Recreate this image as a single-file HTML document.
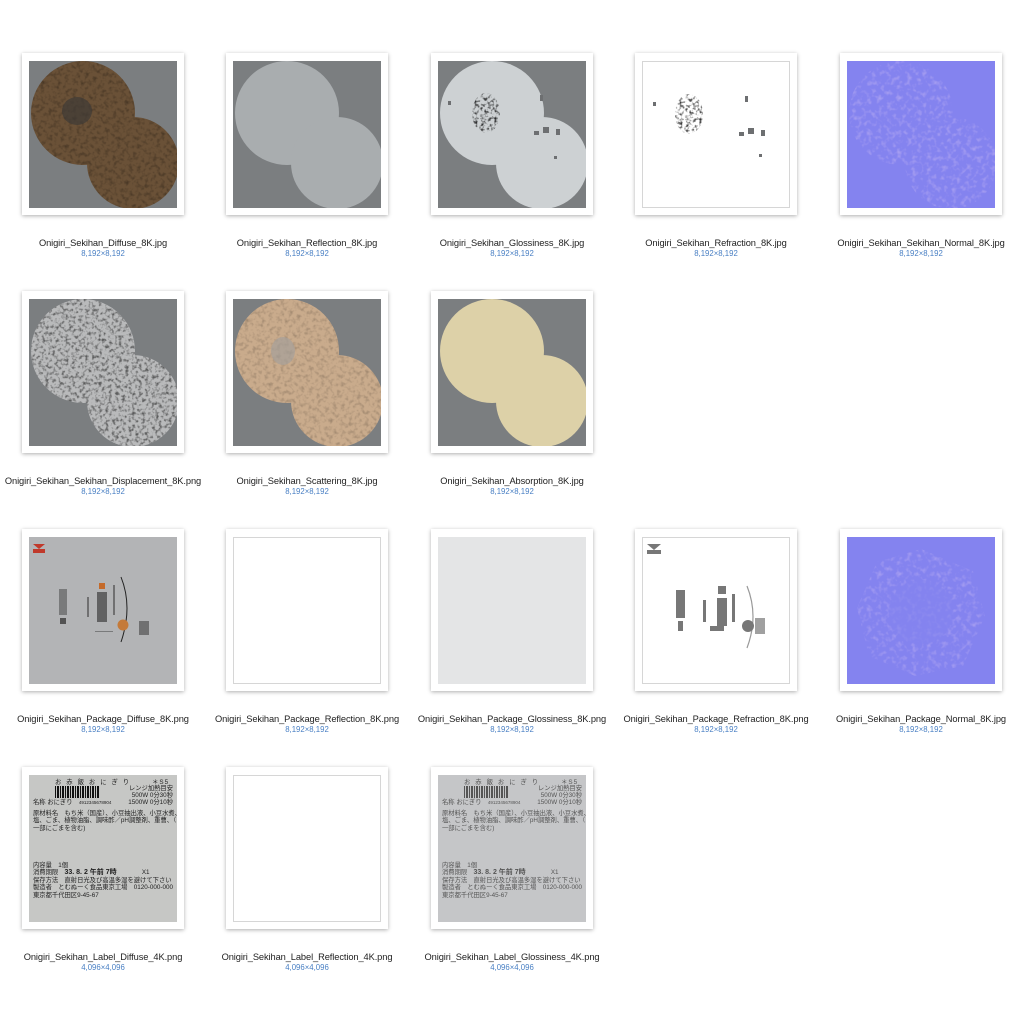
<!DOCTYPE html>
<html><head><meta charset="utf-8"><style>
body{margin:0;width:1024px;height:1024px;background:#fff;position:relative;overflow:hidden;font-family:"Liberation Sans","Noto Sans CJK JP",sans-serif}
.c{position:absolute;width:162px;height:162px;background:#fff;box-shadow:0 1px 4px rgba(0,0,0,.32)}
.i{position:absolute;left:7px;top:8px;width:148px;height:147px;overflow:hidden}
.i svg{display:block}
.w{box-sizing:border-box;border:1px solid #d6d6d6;background:#fff}
.t{position:absolute;width:220px;text-align:center;font-size:9.3px;color:#222;letter-spacing:-.1px}
.d{position:absolute;width:220px;text-align:center;font-size:7.8px;color:#4a80c4}
.lb{position:absolute;left:0;top:0;width:148px;height:147px;font-size:6.3px;line-height:7.4px;color:#222;padding:4px 4px;box-sizing:border-box;white-space:nowrap}
</style></head><body>
<svg width="0" height="0" style="position:absolute"><defs>
<filter id="n1"><feTurbulence type="fractalNoise" baseFrequency=".25" numOctaves="2" seed="3"/><feColorMatrix values="0 0 0 0 0 0 0 0 0 0 0 0 0 0 0 0 0 0 -2.2 1.2"/><feComposite in2="SourceGraphic" operator="in"/></filter>
<filter id="n2"><feTurbulence type="fractalNoise" baseFrequency=".3" numOctaves="2" seed="7"/><feColorMatrix values="0 0 0 0 0 0 0 0 0 0 0 0 0 0 0 0 0 0 -3 1.6"/><feComposite in2="SourceGraphic" operator="in"/></filter>
<filter id="n3"><feTurbulence type="fractalNoise" baseFrequency=".2" numOctaves="2" seed="5"/><feColorMatrix values="0 0 0 0 .6 0 0 0 0 .5 0 0 0 0 .9 0 0 0 -2.5 1.3"/><feComposite in2="SourceGraphic" operator="in"/></filter>
</defs></svg>

<div class="c" style="left:22px;top:53px"><div class="i"><svg width="148" height="147"><rect width="148" height="147" fill="#7b7e80"/><g fill="#6a5137"><circle cx="54" cy="52" r="52"/><circle cx="104" cy="102" r="46"/></g><g fill="#2c2a28" filter="url(#n1)" opacity=".3"><circle cx="54" cy="52" r="52"/><circle cx="104" cy="102" r="46"/></g><ellipse cx="48" cy="50" rx="15" ry="14" fill="#3e3a36" opacity=".7"/></svg></div></div>
<div class="t" style="left:-7px;top:238px">Onigiri_Sekihan_Diffuse_8K.jpg</div><div class="d" style="left:-7px;top:249px">8,192×8,192</div>

<div class="c" style="left:226px;top:53px"><div class="i"><svg width="148" height="147"><rect width="148" height="147" fill="#7b7e80"/><g fill="#a9adaf"><circle cx="54" cy="52" r="52"/><circle cx="104" cy="102" r="46"/></g></svg></div></div>
<div class="t" style="left:197px;top:238px">Onigiri_Sekihan_Reflection_8K.jpg</div><div class="d" style="left:197px;top:249px">8,192×8,192</div>

<div class="c" style="left:431px;top:53px"><div class="i"><svg width="148" height="147"><rect width="148" height="147" fill="#7b7e80"/><g fill="#cdd1d3"><circle cx="54" cy="52" r="52"/><circle cx="104" cy="102" r="46"/></g><g fill="#6d6f71" filter="url(#n2)" opacity=".8"><ellipse cx="48" cy="52" rx="14" ry="20"/></g><g fill="#6d6f71"><rect x="96" y="70" width="5" height="4"/><rect x="105" y="66" width="6" height="6"/><rect x="118" y="68" width="4" height="6"/><rect x="102" y="34" width="3" height="6"/><rect x="10" y="40" width="3" height="4"/><rect x="116" y="95" width="3" height="3"/></g></svg></div></div>
<div class="t" style="left:402px;top:238px">Onigiri_Sekihan_Glossiness_8K.jpg</div><div class="d" style="left:402px;top:249px">8,192×8,192</div>

<div class="c" style="left:635px;top:53px"><div class="i w"><svg width="146" height="145"><g fill="#6d6f71" filter="url(#n2)" opacity=".8"><ellipse cx="46" cy="52" rx="14" ry="20"/></g><g fill="#6d6f71"><rect x="96" y="70" width="5" height="4"/><rect x="105" y="66" width="6" height="6"/><rect x="118" y="68" width="4" height="6"/><rect x="102" y="34" width="3" height="6"/><rect x="10" y="40" width="3" height="4"/><rect x="116" y="92" width="3" height="3"/></g></svg></div></div>
<div class="t" style="left:606px;top:238px">Onigiri_Sekihan_Refraction_8K.jpg</div><div class="d" style="left:606px;top:249px">8,192×8,192</div>

<div class="c" style="left:840px;top:53px"><div class="i"><svg width="148" height="147"><rect width="148" height="147" fill="#8483ef"/><g fill="#6a6ad8" filter="url(#n3)" opacity=".5"><circle cx="54" cy="52" r="52"/><circle cx="104" cy="102" r="46"/></g></svg></div></div>
<div class="t" style="left:811px;top:238px">Onigiri_Sekihan_Sekihan_Normal_8K.jpg</div><div class="d" style="left:811px;top:249px">8,192×8,192</div>

<div class="c" style="left:22px;top:291px"><div class="i"><svg width="148" height="147"><rect width="148" height="147" fill="#7b7e80"/><g fill="#b9babb"><circle cx="54" cy="52" r="52"/><circle cx="104" cy="102" r="46"/></g><g fill="#333" filter="url(#n2)" opacity=".5"><circle cx="54" cy="52" r="52"/><circle cx="104" cy="102" r="46"/></g></svg></div></div>
<div class="t" style="left:-7px;top:476px">Onigiri_Sekihan_Sekihan_Displacement_8K.png</div><div class="d" style="left:-7px;top:487px">8,192×8,192</div>

<div class="c" style="left:226px;top:291px"><div class="i"><svg width="148" height="147"><rect width="148" height="147" fill="#7b7e80"/><g fill="#c9ab8c"><circle cx="54" cy="52" r="52"/><circle cx="104" cy="102" r="46"/></g><g fill="#8a8a86" filter="url(#n1)" opacity=".2"><circle cx="54" cy="52" r="52"/><circle cx="104" cy="102" r="46"/></g><ellipse cx="50" cy="52" rx="12" ry="14" fill="#a5a09a" opacity=".7"/></svg></div></div>
<div class="t" style="left:197px;top:476px">Onigiri_Sekihan_Scattering_8K.jpg</div><div class="d" style="left:197px;top:487px">8,192×8,192</div>

<div class="c" style="left:431px;top:291px"><div class="i"><svg width="148" height="147"><rect width="148" height="147" fill="#7b7e80"/><g fill="#ddd1a8"><circle cx="54" cy="52" r="52"/><circle cx="104" cy="102" r="46"/></g></svg></div></div>
<div class="t" style="left:402px;top:476px">Onigiri_Sekihan_Absorption_8K.jpg</div><div class="d" style="left:402px;top:487px">8,192×8,192</div>

<div class="c" style="left:22px;top:529px"><div class="i" style="background:#b3b4b6"><svg width="148" height="147"><path d="M4 7h12l-6 5z" fill="#c0392b"/><rect x="4" y="12" width="12" height="4" fill="#c0392b"/><g fill="#333" opacity=".75"><rect x="30" y="52" width="8" height="26" opacity=".6"/><rect x="31" y="81" width="6" height="6"/><rect x="58" y="60" width="2" height="20" opacity=".7"/><rect x="68" y="55" width="10" height="30" opacity=".85"/><rect x="84" y="48" width="2" height="30" opacity=".7"/><rect x="66" y="94" width="18" height="1" opacity=".6"/><rect x="110" y="84" width="10" height="14" opacity=".7"/></g><rect x="70" y="46" width="6" height="6" fill="#c46a2a"/><path d="M92 40q12 30 0 65" stroke="#222" stroke-width="1" fill="none"/><circle cx="94" cy="88" r="5.5" fill="#c47a3a"/></svg></div></div>
<div class="t" style="left:-7px;top:714px">Onigiri_Sekihan_Package_Diffuse_8K.png</div><div class="d" style="left:-7px;top:725px">8,192×8,192</div>

<div class="c" style="left:226px;top:529px"><div class="i w"></div></div>
<div class="t" style="left:197px;top:714px">Onigiri_Sekihan_Package_Reflection_8K.png</div><div class="d" style="left:197px;top:725px">8,192×8,192</div>

<div class="c" style="left:431px;top:529px"><div class="i" style="background:#e4e5e6"></div></div>
<div class="t" style="left:402px;top:714px">Onigiri_Sekihan_Package_Glossiness_8K.png</div><div class="d" style="left:402px;top:725px">8,192×8,192</div>

<div class="c" style="left:635px;top:529px"><div class="i w"><svg width="146" height="145"><path d="M4 6h14l-7 6z" fill="#777"/><rect x="4" y="12" width="14" height="4" fill="#777"/><g fill="#777"><rect x="33" y="52" width="9" height="28"/><rect x="35" y="83" width="5" height="10"/><rect x="75" y="48" width="8" height="8"/><rect x="74" y="60" width="10" height="28"/><rect x="60" y="62" width="3" height="22"/><rect x="89" y="56" width="3" height="28"/><rect x="67" y="88" width="14" height="5"/><rect x="112" y="80" width="10" height="16" opacity=".7"/></g><path d="M104 48q12 30 0 62" stroke="#999" stroke-width="1.2" fill="none"/><circle cx="105" cy="88" r="6" fill="#777"/></svg></div></div>
<div class="t" style="left:606px;top:714px">Onigiri_Sekihan_Package_Refraction_8K.png</div><div class="d" style="left:606px;top:725px">8,192×8,192</div>

<div class="c" style="left:840px;top:529px"><div class="i"><svg width="148" height="147"><rect width="148" height="147" fill="#8483ef"/><g fill="#6a6ad8" filter="url(#n3)" opacity=".45"><path d="M74 12l52 22 12 45-22 50-48 10-46-20-12-48 20-46z"/></g><circle cx="74" cy="75" r="32" fill="#8483ef" opacity=".6"/></svg></div></div>
<div class="t" style="left:811px;top:714px">Onigiri_Sekihan_Package_Normal_8K.jpg</div><div class="d" style="left:811px;top:725px">8,192×8,192</div>

<div class="c" style="left:22px;top:767px"><div class="i" style="background:#c6c7c5"><div class="lb"><div style="letter-spacing:5px;padding-left:22px">お赤飯おにぎり　 <span style="letter-spacing:1px">＊S5</span></div><div style="display:flex;justify-content:space-between"><div style="width:44px;height:12px;margin-left:22px;background:repeating-linear-gradient(90deg,#111 0 1px,transparent 1px 2px,#111 2px 4px,transparent 4px 5px)"></div><div style="text-align:right;line-height:6.5px">レンジ加熱目安<br>500W 0分30秒</div></div><div style="display:flex;justify-content:space-between"><span>名称 おにぎり　<span style="font-size:4.5px">4912345678904</span></span><span>1500W 0分10秒</span></div><div style="margin-top:3px">原材料名　もち米（国産）、小豆抽出液、小豆水煮、<br>塩、ごま、植物油脂、調味酢／pH調整剤、重曹、（<br>一部にごまを含む)</div><div style="margin-top:30px">内容量　1個<br>消費期限　<b style="font-size:7px">33. 8. 2 午前 7時</b>　　　　X1<br>保存方法　直射日光及び高温多湿を避けて下さい<br>製造者　とむぬーく食品東京工場　0120-000-000<br>東京都千代田区9-45-67</div></div></div></div>
<div class="t" style="left:-7px;top:952px">Onigiri_Sekihan_Label_Diffuse_4K.png</div><div class="d" style="left:-7px;top:963px">4,096×4,096</div>

<div class="c" style="left:226px;top:767px"><div class="i w"></div></div>
<div class="t" style="left:197px;top:952px">Onigiri_Sekihan_Label_Reflection_4K.png</div><div class="d" style="left:197px;top:963px">4,096×4,096</div>

<div class="c" style="left:431px;top:767px"><div class="i" style="background:#c5c6c8"><div class="lb" style="color:#555"><div style="letter-spacing:5px;padding-left:22px">お赤飯おにぎり　 <span style="letter-spacing:1px">＊S5</span></div><div style="display:flex;justify-content:space-between"><div style="width:44px;height:12px;margin-left:22px;background:repeating-linear-gradient(90deg,#555 0 1px,transparent 1px 2px,#555 2px 4px,transparent 4px 5px)"></div><div style="text-align:right;line-height:6.5px">レンジ加熱目安<br>500W 0分30秒</div></div><div style="display:flex;justify-content:space-between"><span>名称 おにぎり　<span style="font-size:4.5px">4912345678904</span></span><span>1500W 0分10秒</span></div><div style="margin-top:3px">原材料名　もち米（国産）、小豆抽出液、小豆水煮、<br>塩、ごま、植物油脂、調味酢／pH調整剤、重曹、（<br>一部にごまを含む)</div><div style="margin-top:30px">内容量　1個<br>消費期限　<b style="font-size:7px">33. 8. 2 午前 7時</b>　　　　X1<br>保存方法　直射日光及び高温多湿を避けて下さい<br>製造者　とむぬーく食品東京工場　0120-000-000<br>東京都千代田区9-45-67</div></div></div></div>
<div class="t" style="left:402px;top:952px">Onigiri_Sekihan_Label_Glossiness_4K.png</div><div class="d" style="left:402px;top:963px">4,096×4,096</div>
</body></html>
